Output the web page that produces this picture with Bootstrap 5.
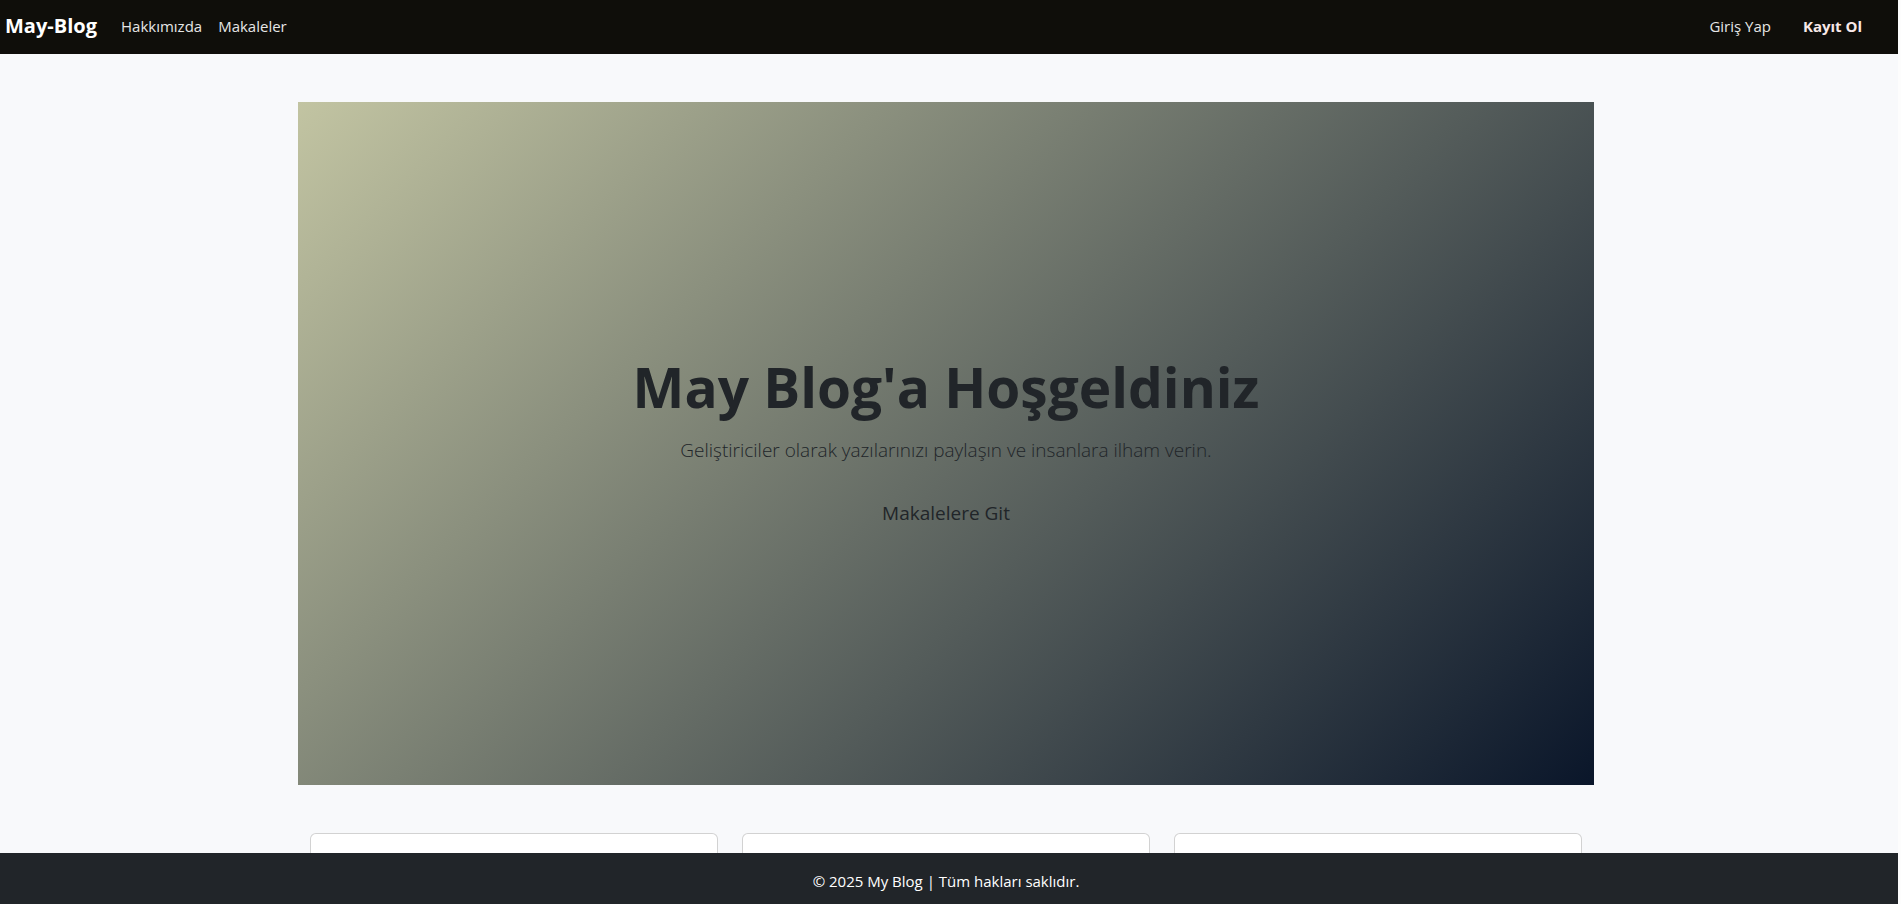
<!DOCTYPE html>
<html lang="tr">
<head>
<meta charset="utf-8">
<meta name="viewport" content="width=device-width, initial-scale=1">
<title>May-Blog</title>
<link href="https://cdn.jsdelivr.net/npm/bootstrap@5.3.0/dist/css/bootstrap.min.css" rel="stylesheet">
<style>
  html { background: #fdfdfd; scrollbar-width: none; }
  body { font-family: "Open Sans", "Noto Sans", sans-serif; font-size: 15px; line-height: 24px; background: transparent; }
  .site { margin-right: 3px; background: #f8f9fb; min-height: 100vh; }
  .site-main { padding-right: 6px; }
  .site-nav { background: #0f0e0a; height: 54px; padding: 0 28px 2px 5px; }
  .site-nav .navbar-brand { font-size: 20px; font-weight: 700; margin-right: 16px; padding: 0; }
  .site-nav .nav-link { color: #e6e6e6; }
  .site-nav .signup-link { color: #f8e8e8; font-weight: 700; margin-left: 16px; }
  .hero { min-height: 683px; background: linear-gradient(135deg, #c2c4a2, #0a162a); }
  .hero h1 { font-size: 55px; line-height: 68px; font-weight: 700; margin: 2px 0 14px; }
  .hero .intro { font-size: 19px; line-height: 30px; font-weight: 300; margin-bottom: 24px; }
  .hero .btn { font-size: 19px; line-height: 30px; padding: 8px 16px; }
  .post-card { min-height: 220px; border-radius: 6px; }
  .site-footer { padding: 16px 6px 11px 0; margin-right: 3px; }
</style>
</head>
<body>
<div class="site">
  <nav class="navbar navbar-expand navbar-dark site-nav">
    <a class="navbar-brand" href="#">May-Blog</a>
    <div class="navbar-nav me-auto">
      <a class="nav-link" href="#">Hakkımızda</a>
      <a class="nav-link" href="#">Makaleler</a>
    </div>
    <div class="navbar-nav">
      <a class="nav-link" href="#">Giriş Yap</a>
      <a class="nav-link signup-link" href="#">Kayıt Ol</a>
    </div>
  </nav>
  <main class="site-main">
    <div class="container py-5">
      <section class="hero d-flex flex-column align-items-center justify-content-center text-center mb-5">
        <h1>May Blog'a Hoşgeldiniz</h1>
        <p class="intro">Geliştiriciler olarak yazılarınızı paylaşın ve insanlara ilham verin.</p>
        <a class="btn" href="#">Makalelere Git</a>
      </section>
      <div class="row mx-0">
        <div class="col-4"><div class="card post-card"></div></div>
        <div class="col-4"><div class="card post-card"></div></div>
        <div class="col-4"><div class="card post-card"></div></div>
      </div>
    </div>
  </main>
</div>
<footer class="site-footer fixed-bottom text-bg-dark text-center">© 2025 My Blog | Tüm hakları saklıdır.</footer>
<script src="https://cdn.jsdelivr.net/npm/bootstrap@5.3.0/dist/js/bootstrap.bundle.min.js"></script>
</body>
</html>
